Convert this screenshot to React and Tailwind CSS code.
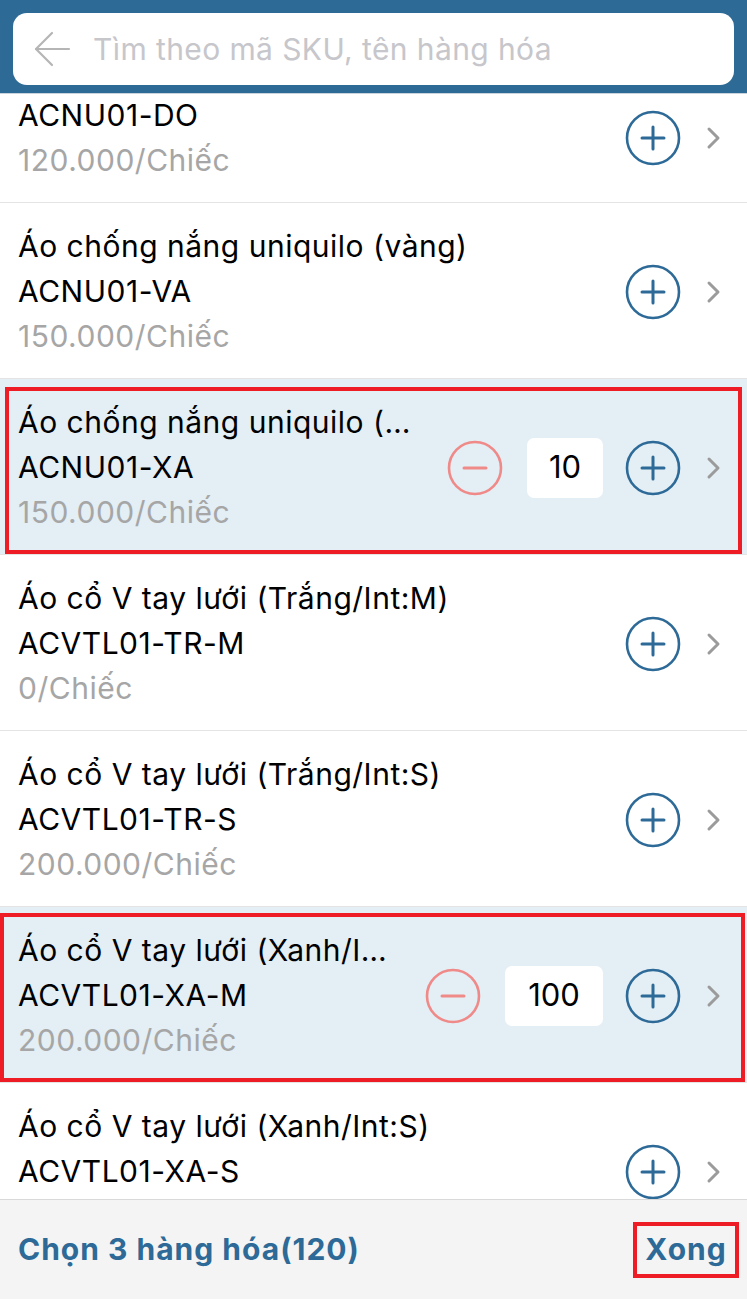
import React from "react";

const BLUE = "#2d6a97";

function PlusIcon() {
  return (
    <svg width="56" height="56" viewBox="0 0 56 56" className="shrink-0">
      <circle cx="28" cy="28" r="26" fill="none" stroke={BLUE} strokeWidth="2.6" />
      <line x1="17" y1="28" x2="39" y2="28" stroke={BLUE} strokeWidth="3" strokeLinecap="round" />
      <line x1="28" y1="17" x2="28" y2="39" stroke={BLUE} strokeWidth="3" strokeLinecap="round" />
    </svg>
  );
}

function MinusIcon() {
  return (
    <svg width="56" height="56" viewBox="0 0 56 56" className="shrink-0">
      <circle cx="28" cy="28" r="26" fill="none" stroke="#f08a88" strokeWidth="2.6" />
      <line x1="17" y1="28" x2="39" y2="28" stroke="#f08a88" strokeWidth="3" strokeLinecap="round" />
    </svg>
  );
}

function Chevron() {
  return (
    <svg width="16" height="24" viewBox="0 0 16 24" className="shrink-0">
      <polyline points="3,3 12,12 3,21" fill="none" stroke="#9b9b9b" strokeWidth="3" strokeLinecap="round" strokeLinejoin="round" />
    </svg>
  );
}

const rows = [
  { sku: "ACNU01-DO", price: "120.000/Chiếc" },
  { title: "Áo chống nắng uniquilo (vàng)", sku: "ACNU01-VA", price: "150.000/Chiếc" },
  { title: "Áo chống nắng uniquilo (…", sku: "ACNU01-XA", price: "150.000/Chiếc", qty: "10", qw: "w-[76px]", mark: "top-[8px] bottom-0 left-[5px] right-[5px]" },
  { title: "Áo cổ V tay lưới (Trắng/Int:M)", sku: "ACVTL01-TR-M", price: "0/Chiếc" },
  { title: "Áo cổ V tay lưới (Trắng/Int:S)", sku: "ACVTL01-TR-S", price: "200.000/Chiếc" },
  { title: "Áo cổ V tay lưới (Xanh/I…", sku: "ACVTL01-XA-M", price: "200.000/Chiếc", qty: "100", qw: "w-[98px]", mark: "top-[6px] bottom-0 left-0 right-[2px]" },
  { title: "Áo cổ V tay lưới (Xanh/Int:S)", sku: "ACVTL01-XA-S" },
];

function Row({ r, first }) {
  const sel = !!r.qty;
  return (
    <div
      className={
        "relative flex items-center border-b border-[#e4e4e4] pl-[18px] pr-[25px] pt-[21px] pb-[19px] " +
        (sel ? "bg-[#e3eef5] " : "bg-white ") +
        (first ? "-mt-[22px]" : "")
      }
    >
      <div className="flex-1 min-w-0 text-[30px] leading-[45px] tracking-[0.5px]">
        {r.title && <div className="whitespace-nowrap overflow-hidden text-black">{r.title}</div>}
        <div className="whitespace-nowrap text-black">{r.sku}</div>
        {r.price ? (
          <div className="whitespace-nowrap text-[#a6a6a6]">{r.price}</div>
        ) : (
          <div className="h-[45px]" />
        )}
      </div>
      <div className="flex items-center">
        {sel && (
          <>
            <MinusIcon />
            <div className={"ml-[24px] h-[60px] rounded-[7px] bg-white flex items-center justify-center text-[31px] text-black " + r.qw}>
              {r.qty}
            </div>
          </>
        )}
        <div className={sel ? "ml-[22px]" : ""}>
          <PlusIcon />
        </div>
        <div className="ml-[25px] flex items-center">
          <Chevron />
        </div>
      </div>
      {sel && <div className={"absolute border-4 border-[#ee1c25] pointer-events-none " + r.mark} />}
    </div>
  );
}

export default function App() {
  return (
    <div
      className="w-[747px] h-[1299px] flex flex-col bg-white overflow-hidden"
      style={{ fontFamily: "Inter, 'Noto Sans', sans-serif" }}
    >
      <div className="h-[94px] shrink-0 bg-[#2d6a96] border-b border-[#c9d3db] px-[13px] pt-[13px]">
        <div className="h-[72px] bg-white rounded-[14px] flex items-center pl-[20px]">
          <svg width="38" height="38" viewBox="0 0 38 38" className="shrink-0">
            <line x1="3" y1="19" x2="36" y2="19" stroke="#b5b5b5" strokeWidth="2.2" strokeLinecap="round" />
            <polyline points="19,3 3,19 19,35" fill="none" stroke="#b5b5b5" strokeWidth="2.2" strokeLinecap="round" strokeLinejoin="round" />
          </svg>
          <span className="ml-[22px] text-[30px] tracking-[0.4px] text-[#c6c6cb] whitespace-nowrap">Tìm theo mã SKU, tên hàng hóa</span>
        </div>
      </div>
      <div className="flex-1 min-h-0 overflow-hidden">
        {rows.map((r, i) => (
          <Row key={i} r={r} first={i === 0} />
        ))}
      </div>
      <div className="h-[100px] shrink-0 bg-[#f4f4f4] border-t border-[#d9d9d9] flex items-center justify-between pl-[18px] pr-[8px]">
        <span className="text-[30px] font-bold tracking-[1px] text-[#2d6a97] whitespace-nowrap">Chọn 3 hàng hóa(120)</span>
        <div className="w-[106px] h-[56px] border-4 border-[#ee1c25] flex items-center justify-center">
          <span className="text-[30px] font-bold tracking-[1px] text-[#2d6a97]">Xong</span>
        </div>
      </div>
    </div>
  );
}
